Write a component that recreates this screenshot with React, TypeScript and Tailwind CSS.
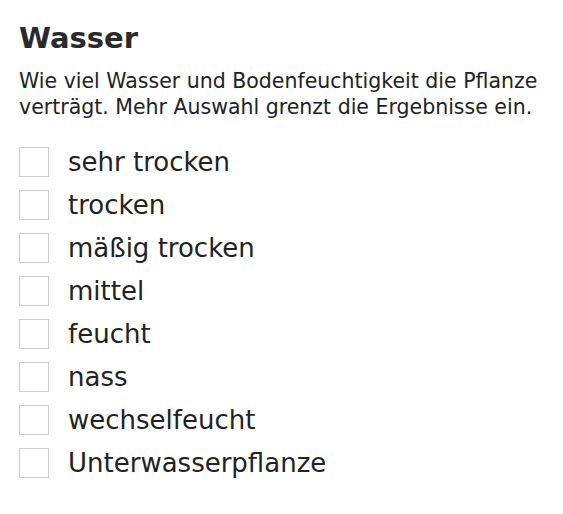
const OPTIONS = [
  "sehr trocken",
  "trocken",
  "mäßig trocken",
  "mittel",
  "feucht",
  "nass",
  "wechselfeucht",
  "Unterwasserpflanze",
];

function Option({ label }: { label: string }) {
  return (
    <label className="flex h-[43px] items-center gap-[19px]">
      <span className="h-[30px] w-[30px] shrink-0 border border-[#cccccc] bg-white" />
      <span className="text-[26px] leading-none">{label}</span>
    </label>
  );
}

export default function App() {
  return (
    <div
      className="min-h-screen bg-white pl-[19px] pr-[12px] pt-[20px] text-[#222222]"
      style={{ fontFamily: '"DejaVu Sans", Verdana, sans-serif' }}
    >
      <h2 className="text-[29px] font-bold leading-[36px] text-[#2a2a2a]">Wasser</h2>
      <p className="mt-[12px] text-[20.5px] leading-[26px]">
        Wie viel Wasser und Bodenfeuchtigkeit die Pflanze verträgt. Mehr Auswahl grenzt die
        Ergebnisse ein.
      </p>
      <div className="mt-[20px] flex flex-col">
        {OPTIONS.map((o) => (
          <Option key={o} label={o} />
        ))}
      </div>
    </div>
  );
}
